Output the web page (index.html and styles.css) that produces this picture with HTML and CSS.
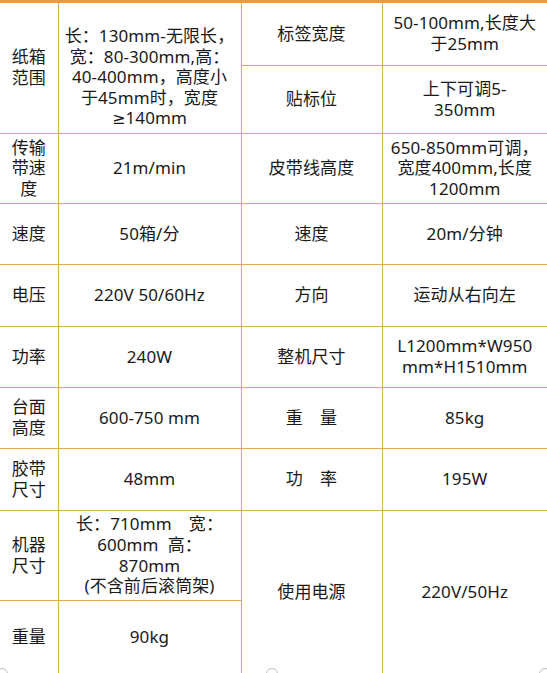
FILE: index.html
```html
<!DOCTYPE html>
<html lang="zh-CN">
<head>
<meta charset="utf-8">
<title>参数表</title>
<link rel="stylesheet" href="styles.css">
</head>
<body>
<div class="page">
<table class="spec">
  <colgroup>
    <col class="c1"><col class="c2"><col class="c3"><col class="c4">
  </colgroup>
  <tr class="r1 first">
    <td rowspan="2">纸箱<br>范围</td>
    <td rowspan="2" class="shift">长：130mm-无限长，<br>宽：80-300mm,高：<br>40-400mm，高度小<br>于45mm时，宽度<br><span class="ge">≥</span>140mm</td>
    <td>标签宽度</td>
    <td>50-100mm,长度大<br>于25mm</td>
  </tr>
  <tr class="r2">
    <td>贴标位</td>
    <td>上下可调5-<br>350mm</td>
  </tr>
  <tr class="r3">
    <td>传输<br>带速<br>度</td>
    <td>21m/min</td>
    <td>皮带线高度</td>
    <td>650-850mm可调，<br>宽度400mm,长度<br>1200mm</td>
  </tr>
  <tr class="r4">
    <td>速度</td>
    <td>50箱/分</td>
    <td>速度</td>
    <td>20m/分钟</td>
  </tr>
  <tr class="r5">
    <td>电压</td>
    <td>220V 50/60Hz</td>
    <td>方向</td>
    <td>运动从右向左</td>
  </tr>
  <tr class="r6">
    <td>功率</td>
    <td>240W</td>
    <td>整机尺寸</td>
    <td>L1200mm*W950<br>mm*H1510mm</td>
  </tr>
  <tr class="r7">
    <td>台面<br>高度</td>
    <td>600-750 mm</td>
    <td>重　量</td>
    <td>85kg</td>
  </tr>
  <tr class="r8">
    <td>胶带<br>尺寸</td>
    <td>48mm</td>
    <td>功　率</td>
    <td>195W</td>
  </tr>
  <tr class="r9">
    <td>机器<br>尺寸</td>
    <td>长：710mm　宽：<br>600mm&nbsp;&nbsp;高：<br>870mm<br>(不含前后滚筒架)</td>
    <td rowspan="2">使用电源</td>
    <td rowspan="2">220V/50Hz</td>
  </tr>
  <tr class="r10">
    <td>重量</td>
    <td>90kg</td>
  </tr>
</table>
<span class="dot d1"></span>
<span class="dot d2"></span>
<span class="dot d3"></span>
</div>
</body>
</html>
```
FILE: styles.css
```css
html, body {
  margin: 0;
  padding: 0;
  background: #ffffff;
}
.page {
  position: relative;
  width: 547px;
  height: 673px;
  overflow: hidden;
}
.spec {
  border-collapse: collapse;
  table-layout: fixed;
  width: 547px;
  font-family: "Noto Sans", "Noto Sans CJK SC", sans-serif;
  font-size: 17px;
  line-height: 20.6px;
  color: #1a1a1a;
  letter-spacing: 0.1px;
}
.c1 { width: 58px; }
.c2 { width: 183px; }
.c3 { width: 141px; }
.c4 { width: 165px; }
.spec td {
  border: 1px solid #dcad52;
  padding: 0;
  text-align: center;
  vertical-align: middle;
  white-space: nowrap;
}
.spec tr td:first-child { border-left: none; }
.spec tr td:last-child { border-right: none; }
.spec tr.r2 td:first-child { border-left: 1px solid #dcad52; }
.spec tr.r10 td:last-child { border-right: 1px solid #dcad52; }
.spec tr.r10 td:first-child { border-left: none; }
.spec tr.first td { border-top: 3px solid #f39a3a; }
.spec td.shift { padding-top: 20px; }
.ge { font-family: "DejaVu Sans", sans-serif; font-size: 16px; }
.r1 { height: 64px; }
.r2 { height: 68px; }
.r3 { height: 70px; }
.r4 { height: 61px; }
.r5 { height: 62px; }
.r6 { height: 61px; }
.r7 { height: 61px; }
.r8 { height: 62px; }
.r9 { height: 90px; }
.r10 { height: 74px; }
.dot {
  position: absolute;
  top: 668px;
  width: 10px;
  height: 10px;
  border: 1px solid #bdbdbd;
  border-radius: 50%;
  background: #ffffff;
}
.d1 { left: -4px; }
.d2 { left: 266px; }
.d3 { left: 539px; }
```
